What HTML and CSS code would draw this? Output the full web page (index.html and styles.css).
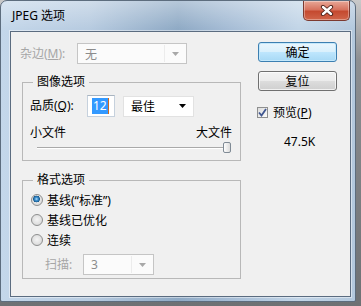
FILE: index.html
```html
<!DOCTYPE html>
<html>
<head>
    <meta charset="utf-8">
    <title>JPEG 选项</title>
    <link rel="stylesheet" href="styles.css">
</head>
<body>
    <div class="window">
        <div class="titlebar">
            <span class="title">JPEG 选项</span>
            <button class="close" aria-label="关闭">
                <svg width="14" height="11" viewBox="0 0 14 11">
                    <path d="M3 2 L11 9 M11 2 L3 9" stroke="#4a2018" stroke-width="4.2" stroke-linecap="round"/>
                    <path d="M3 2 L11 9 M11 2 L3 9" stroke="#fff" stroke-width="2.4" stroke-linecap="round"/>
                </svg>
            </button>
        </div>

        <div class="client">
            <div class="main">
                <div class="row matte">
                    <label class="lbl disabled">杂边(<u>M</u>):</label>
                    <div class="select disabled-select w-matte">
                        <span>无</span>
                        <span class="split"></span>
                        <svg class="arrow" width="7" height="4" viewBox="0 0 7 4"><path d="M0 0 H7 L3.5 4 Z" fill="#a8a8a8"/></svg>
                    </div>
                </div>

                <fieldset class="group image-group">
                    <legend>图像选项</legend>
                    <div class="row quality">
                        <label class="lbl">品质(<u>Q</u>):</label>
                        <div class="num"><span class="sel">12</span><span class="caret"></span></div>
                        <div class="select w-quality">
                            <span>最佳</span>
                            <svg class="arrow" width="7" height="4" viewBox="0 0 7 4"><path d="M0 0 H7 L3.5 4 Z" fill="#000"/></svg>
                        </div>
                    </div>
                    <div class="scale-labels"><span>小文件</span><span>大文件</span></div>
                    <div class="slider"><span class="thumb"></span></div>
                </fieldset>

                <fieldset class="group format-group">
                    <legend>格式选项</legend>
                    <div class="radio-row"><span class="radio checked"></span>基线(“标准”)</div>
                    <div class="radio-row"><span class="radio"></span>基线已优化</div>
                    <div class="radio-row"><span class="radio"></span>连续</div>
                    <div class="row scan">
                        <label class="lbl disabled">扫描:</label>
                        <div class="select disabled-select w-scan">
                            <span>3</span>
                            <span class="split"></span>
                            <svg class="arrow" width="7" height="4" viewBox="0 0 7 4"><path d="M0 0 H7 L3.5 4 Z" fill="#a8a8a8"/></svg>
                        </div>
                    </div>
                </fieldset>
            </div>

            <div class="side">
                <button class="btn default">确定</button>
                <button class="btn">复位</button>
                <div class="check-row">
                    <span class="checkbox">
                        <svg width="9" height="9" viewBox="0 0 9 9"><path d="M1 4.5 L3.5 7.5 L8 1" fill="none" stroke="#3f5690" stroke-width="1.8"/></svg>
                    </span>
                    预览(<u>P</u>)
                </div>
                <div class="size">47.5K</div>
            </div>
        </div>
    </div>
</body>
</html>
```

FILE: styles.css
```css
body {
    margin: 0;
    background: linear-gradient(to bottom, #c9c9c9 0, #8d8f92 60px, #6e7174 100%);
    height: 306px;
    font-family: "Noto Sans", "Noto Sans CJK SC", sans-serif;
    font-size: 12px;
    color: #000;
}
.window {
    width: 356px;
    height: 302px;
    box-sizing: border-box;
    display: flex;
    flex-direction: column;
    border: 1px solid #5d6d7e;
    border-radius: 7px 7px 2px 2px;
    background:
        linear-gradient(to bottom, rgba(255,255,255,.35), rgba(255,255,255,0) 28px),
        linear-gradient(to right, #c4d7ea 0%, #b7cbe0 25%, #8faac5 50%, #a5bcd5 64%, #c2d5e7 84%, #b3c8dd 100%);
}
.titlebar {
    height: 30px;
    display: flex;
    justify-content: space-between;
    align-items: flex-start;
}
.title {
    padding: 7px 0 0 11px;
    line-height: 16px;
    font-size: 12px;
}
.close {
    width: 47px;
    height: 20px;
    margin-right: 5px;
    padding: 0;
    display: flex;
    align-items: center;
    justify-content: center;
    border: 1px solid #7c3a30;
    border-top: none;
    border-radius: 0 0 5px 5px;
    background: linear-gradient(to bottom, #e8a898 0%, #d7735f 45%, #c54a30 55%, #d0654a 100%);
    box-shadow: inset 0 0 0 1px rgba(255,255,255,.35);
}
.client {
    flex: 1;
    margin: 0 4px 4px 9px;
    display: flex;
    background: #f0f0f0;
    border: 1px solid #5b6c80;
    box-shadow: 0 0 0 1px rgba(255,255,255,.45);
}
.main {
    width: 220px;
    padding: 11px 0 0 9px;
}
.row {
    display: flex;
    align-items: center;
}
.lbl {
    width: 57px;
    line-height: 16px;
}
u {
    text-decoration: underline;
    text-underline-offset: 1px;
}
.disabled {
    color: #a6a6a6;
}
.matte {
    height: 21px;
}
.select {
    height: 21px;
    box-sizing: border-box;
    display: flex;
    align-items: center;
    padding-left: 7px;
    background: #fff;
    border: 1px solid #e2e2e2;
}
.select > span:first-child {
    flex: 1;
}
.select .arrow {
    margin-right: 7px;
}
.disabled-select {
    color: #8c8c8c;
    background: #fbfbfb;
    border-color: #c5c5c5;
}
.split {
    width: 1px;
    align-self: stretch;
    margin: 1px 7px 1px 0;
    background: #ececec;
}
.w-matte {
    width: 110px;
}
.w-quality {
    width: 71px;
    margin-left: 8px;
}
.w-scan {
    width: 71px;
}
.group {
    margin: 10px 0 0 2px;
    width: 219px;
    box-sizing: border-box;
    border: 1px solid #b8b8b8;
    padding: 5px 8px 7px 7px;
    min-width: 0;
}
.group legend {
    margin-left: 3px;
    padding: 0 4px;
    line-height: 16px;
}
.quality {
    height: 22px;
}
.num {
    width: 28px;
    height: 22px;
    box-sizing: border-box;
    display: flex;
    align-items: center;
    padding-left: 4px;
    background: #fff;
    border: 1px solid #c6d1dd;
    border-top-color: #a9b4c0;
}
.sel {
    background: #3399ff;
    color: #fff;
    line-height: 16px;
    padding: 0 1px;
}
.caret {
    width: 1px;
    height: 16px;
    background: #cc6a22;
}
.scale-labels {
    margin-top: 8px;
    display: flex;
    justify-content: space-between;
    line-height: 16px;
}
.slider {
    margin: 1px 1px 0 7px;
    height: 11px;
    display: flex;
    justify-content: flex-end;
    background:
        linear-gradient(#a9a9a9, #a9a9a9) no-repeat 0 5px / 100% 1px,
        linear-gradient(#ffffff, #ffffff) no-repeat 0 6px / 100% 1px;
}
.thumb {
    width: 8px;
    height: 11px;
    box-sizing: border-box;
    border: 1px solid #7f8a95;
    border-radius: 2px;
    background: linear-gradient(to right, #fdfdfd, #dcdcdc);
}
.format-group {
    margin-top: 11px;
    padding: 2px 8px 3px 7px;
}
.radio-row {
    height: 20px;
    display: flex;
    align-items: center;
}
.radio {
    width: 12px;
    height: 12px;
    box-sizing: border-box;
    margin: 0 4px 0 1px;
    border-radius: 50%;
    border: 1px solid #8e8f8f;
    background: radial-gradient(circle at 50% 45%, #f4f4f4 0, #e2e2e2 55%, #cfcfcf 100%);
}
.radio.checked {
    background:
        radial-gradient(circle at 45% 40%, #b8e2fb 0, #3b8fd0 1.6px, #1d5d8e 3.2px, transparent 3.6px),
        radial-gradient(circle at 50% 45%, #f4f4f4 0, #e2e2e2 55%, #cfcfcf 100%);
}
.scan {
    margin-top: 4px;
    padding-left: 15px;
}
.scan .lbl {
    width: 38px;
}
.side {
    margin-left: 18px;
    padding-top: 10px;
    width: 79px;
    display: flex;
    flex-direction: column;
}
.btn {
    width: 79px;
    height: 20px;
    padding: 0;
    font-family: inherit;
    font-size: 12px;
    color: #000;
    border: 1px solid #707070;
    border-radius: 3px;
    background: linear-gradient(to bottom, #f2f2f2 0%, #ebebeb 50%, #dddddd 51%, #cfcfcf 100%);
    box-shadow: inset 0 0 0 1px rgba(255,255,255,.7);
}
.btn + .btn {
    margin-top: 9px;
}
.btn.default {
    border-color: #3c7fb1;
    background: linear-gradient(to bottom, #eaf6fd 0%, #d9f0fc 50%, #bee6fd 51%, #a7d9f5 100%);
    box-shadow: inset 0 0 0 1px #c4e8fb;
}
.check-row {
    margin-top: 13px;
    margin-left: -1px;
    height: 16px;
    display: flex;
    align-items: center;
}
.checkbox {
    width: 11px;
    height: 11px;
    box-sizing: border-box;
    margin-right: 5px;
    display: flex;
    align-items: center;
    justify-content: center;
    border: 1px solid #8e8f8f;
    background: linear-gradient(135deg, #dcdcdc, #fbfbfb);
}
.size {
    margin-top: 14px;
    padding-left: 26px;
    line-height: 16px;
}
```
